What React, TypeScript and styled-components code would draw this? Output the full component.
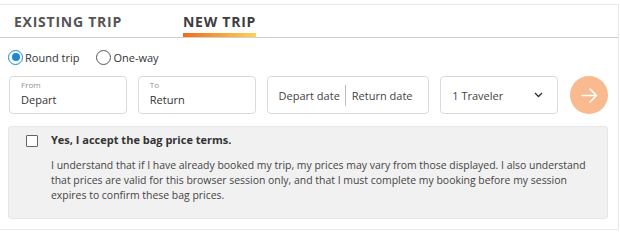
import styled, { createGlobalStyle } from 'styled-components'

const GlobalStyle = createGlobalStyle`
  body {
    margin: 0;
    background: #fff;
    font-family: "Open Sans", "Liberation Sans", sans-serif;
    color: #333;
  }
`

const Panel = styled.div`
  margin-top: 4px;
  width: 619px;
  height: 226px;
  border: 1px solid #e8e8e8;
  border-left: none;
  box-sizing: border-box;
`

const Tabs = styled.div`
  display: flex;
  gap: 61px;
  padding-left: 14px;
  height: 32px;
  border-bottom: 1px solid #cfcfcf;
`

const Tab = styled.div<{ $active?: boolean }>`
  position: relative;
  display: flex;
  align-items: center;
  font-size: 14px;
  font-weight: 700;
  letter-spacing: 0.75px;
  text-transform: uppercase;
  color: ${(p) => (p.$active ? '#3d3d3d' : '#555')};
  &::after {
    content: '';
    display: ${(p) => (p.$active ? 'block' : 'none')};
    position: absolute;
    left: 0;
    right: 0;
    bottom: 0;
    height: 4px;
    background: linear-gradient(90deg, #f26a1b, #fbd458);
  }
`

const Body = styled.div`
  padding: 11px 10px 0 8px;
`

const RadioRow = styled.div`
  display: flex;
  gap: 17px;
  height: 16px;
  align-items: center;
`

const RadioLabel = styled.label`
  display: flex;
  align-items: center;
  gap: 2px;
  font-size: 11px;
  color: #333;
`

const RadioDot = styled.span<{ $checked?: boolean }>`
  width: 15px;
  height: 15px;
  box-sizing: border-box;
  border-radius: 50%;
  border: ${(p) => (p.$checked ? '1.5px solid #1a88d4' : '1.2px solid #555')};
  display: flex;
  align-items: center;
  justify-content: center;
  &::after {
    content: '';
    display: ${(p) => (p.$checked ? 'block' : 'none')};
    width: 8px;
    height: 8px;
    border-radius: 50%;
    background: #1a88d4;
  }
`

const FieldRow = styled.div`
  display: flex;
  align-items: center;
  gap: 11px;
  margin-top: 11px;
  padding-left: 1px;
`

const Field = styled.div<{ $w: number }>`
  width: ${(p) => p.$w}px;
  height: 38px;
  box-sizing: border-box;
  border: 1px solid #dadada;
  border-radius: 4px;
  background: #fff;
  padding: 3px 11px 0;
  display: flex;
  flex-direction: column;
`

const FieldLabel = styled.span`
  font-size: 8px;
  color: #8f8f8f;
  line-height: 10px;
`

const FieldValue = styled.span`
  font-size: 11px;
  color: #333;
  line-height: 14px;
  margin-top: 3px;
`

const DateField = styled(Field)`
  flex-direction: row;
  align-items: center;
  padding: 0 0 0 11px;
  font-size: 11px;
  color: #444;
`

const DateSep = styled.span`
  width: 1px;
  height: 21px;
  background: #bbb;
  margin: 0 6px 0 5px;
`

const SelectField = styled(Field)`
  flex-direction: row;
  align-items: center;
  justify-content: space-between;
  padding: 0 14px 0 11px;
  font-size: 11px;
  color: #444;
`

const GoButton = styled.button`
  width: 38px;
  height: 38px;
  border-radius: 50%;
  border: none;
  background: #f9ba8f;
  margin-left: 1px;
  display: flex;
  align-items: center;
  justify-content: center;
  padding: 0;
`

const Terms = styled.div`
  margin-top: 12px;
  width: 600px;
  height: 93px;
  box-sizing: border-box;
  background: #f1f1f1;
  border: 1px solid #e6e6e6;
  border-radius: 3px;
  display: flex;
  gap: 13px;
  padding: 5px 9px 0 17px;
`

const Check = styled.span`
  flex: none;
  width: 12px;
  height: 12px;
  margin-top: 3px;
  box-sizing: border-box;
  border: 1.3px solid #666;
  border-radius: 1px;
  background: #fff;
`

const TermsText = styled.div`
  font-size: 11px;
  color: #333;
`

const TermsTitle = styled.div`
  font-weight: 700;
  line-height: 15px;
`

const TermsBody = styled.p`
  margin: 11px 0 0;
  font-size: 10.45px;
  line-height: 15px;
  color: #444;
`

export default function App() {
  return (
    <>
      <GlobalStyle />
      <Panel>
        <Tabs>
          <Tab>Existing Trip</Tab>
          <Tab $active>New Trip</Tab>
        </Tabs>
        <Body>
          <RadioRow>
            <RadioLabel>
              <RadioDot $checked />
              Round trip
            </RadioLabel>
            <RadioLabel>
              <RadioDot />
              One-way
            </RadioLabel>
          </RadioRow>
          <FieldRow>
            <Field $w={118}>
              <FieldLabel>From</FieldLabel>
              <FieldValue>Depart</FieldValue>
            </Field>
            <Field $w={118}>
              <FieldLabel>To</FieldLabel>
              <FieldValue>Return</FieldValue>
            </Field>
            <DateField $w={163}>
              Depart date
              <DateSep />
              Return date
            </DateField>
            <SelectField $w={118}>
              1 Traveler
              <svg width="9" height="6" viewBox="0 0 9 6" fill="none">
                <path d="M1 1l3.5 3.5L8 1" stroke="#333" strokeWidth="1.4" />
              </svg>
            </SelectField>
            <GoButton aria-label="Search">
              <svg width="17" height="15" viewBox="0 0 17 15" fill="none">
                <path d="M1 7.5h14.5M9 1l6.5 6.5L9 14" stroke="#fff" strokeWidth="1.6" strokeLinecap="round" strokeLinejoin="round" />
              </svg>
            </GoButton>
          </FieldRow>
          <Terms>
            <Check />
            <TermsText>
              <TermsTitle>Yes, I accept the bag price terms.</TermsTitle>
              <TermsBody>
                I understand that if I have already booked my trip, my prices may vary from those displayed. I also
                understand that prices are valid for this browser session only, and that I must complete my booking
                before my session expires to confirm these bag prices.
              </TermsBody>
            </TermsText>
          </Terms>
        </Body>
      </Panel>
    </>
  )
}
